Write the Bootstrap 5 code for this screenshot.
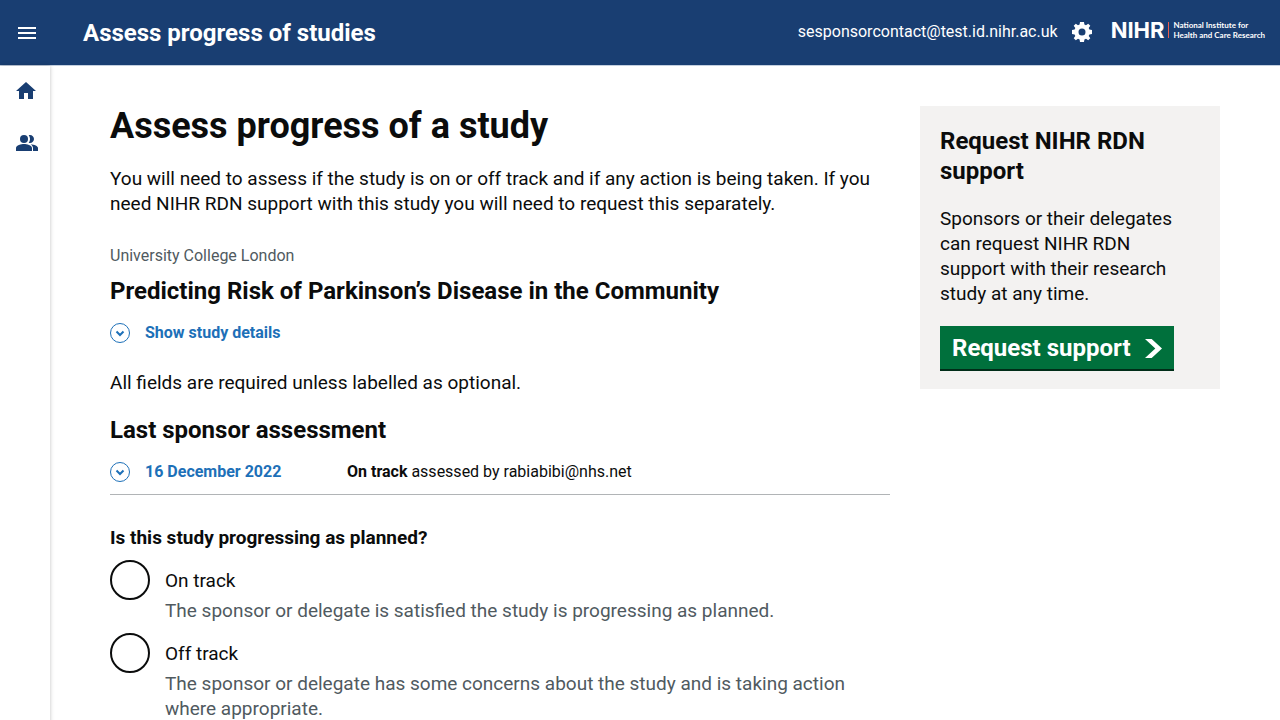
<!DOCTYPE html>
<html lang="en">
<head>
<meta charset="utf-8">
<meta name="viewport" content="width=device-width, initial-scale=1">
<title>Assess progress of studies</title>
<link href="https://cdn.jsdelivr.net/npm/bootstrap@5.3.0/dist/css/bootstrap.min.css" rel="stylesheet">
<style>
:root { --navy: #193e72; --ink: #0b0c0c; --muted: #505a5f; --blue: #1d70b8; }
body { font-family: Roboto, Arial, sans-serif; font-size: 19px; line-height: 25px; color: var(--ink); }
h1, h2, h3, p, legend { margin: 0; }
svg { display: block; flex: none; }
.app-header { background: var(--navy); height: 66px; border-bottom: 1px solid #c3cfdf; color: #fff; }
.menu-btn { width: 53px; height: 65px; color: #fff; }
.app-title { font-size: 24px; line-height: 30px; font-weight: 700; margin-left: 30px; }
.header-tools { padding-bottom: 2px; }
.user-mail { font-size: 16px; line-height: 20px; margin-right: 14px; }
.logo-link { margin: 0 15px 4px 19px; }
.logo-name { font: 700 22px/22px Inter, sans-serif; }
.logo-bar { width: 1px; height: 16px; background: #ea5d4e; }
.logo-text { font: 700 8px/10px Lato, sans-serif; }
.side-nav { width: 50px; flex: none; background: #fff; box-shadow: 0 0 4px rgba(0,0,0,.25); padding: 13px 0 0 14px; gap: 28px; color: var(--navy); }
.page-body { padding: 40px 60px; gap: 30px; }
h1 { font-size: 36px; line-height: 40px; font-weight: 700; }
.title-m { font-size: 24px; line-height: 30px; font-weight: 700; }
.text-s { font-size: 16px; line-height: 20px; }
.text-hint { color: var(--muted); }
.org { margin-top: 30px; }
.study-title { margin-top: 10px; }
.required-note { margin-top: 27px; }
.section-title { margin-top: 20px; }
.toggle { color: var(--blue); font-weight: 700; gap: 15px; text-align: left; }
.study-toggle, .assessment { margin-top: 17px; }
.assessment { gap: 60px; padding-bottom: 12px; border-bottom: 1px solid #b1b4b6; }
.assessment .toggle { min-width: 177px; }
.study-form { margin-top: 30px; }
.question { font-size: 19px; line-height: 25px; font-weight: 700; margin-bottom: 10px; }
.big-radio { appearance: none; width: 40px; height: 40px; margin: 0; border: 2px solid var(--ink); border-radius: 50%; background: #fff; flex: none; }
.big-radio:checked { background: radial-gradient(var(--ink) 10px, #fff 11px); }
.option { gap: 15px; margin-bottom: 10px; }
.option-text { padding-top: 8px; }
.option-text label { display: block; }
.option-text p { margin-top: 5px; }
.support { width: 300px; background: #f3f2f1; padding: 20px 20px 18px; flex: none; }
.support-btn { min-width: 234px; background: #00703c; color: #fff; font-size: 24px; line-height: 30px; font-weight: 700; border-bottom: 2px solid #002d18; padding: 7px 12px 6px; gap: 11px; }
.support-btn:hover { background: #005a30; }
</style>
</head>
<body>
<div class="d-flex flex-column min-vh-100">
<header class="app-header d-flex align-items-center">
  <button type="button" class="menu-btn border-0 bg-transparent p-0 d-flex align-items-center justify-content-center" aria-label="Menu">
    <svg width="18" height="12" viewBox="0 0 18 12" fill="currentColor"><path d="M0 0h18v2H0zM0 5h18v2H0zM0 10h18v2H0z"/></svg>
  </button>
  <div class="app-title">Assess progress of studies</div>
  <div class="header-tools ms-auto d-flex align-items-center">
    <span class="user-mail">sesponsorcontact@test.id.nihr.ac.uk</span>
    <a href="#" class="text-white" aria-label="Settings">
      <svg width="20" height="20" viewBox="2 2 20 20" fill="currentColor" fill-rule="evenodd"><path d="M10 2h4l.4 2.600 1.600.7 2.200-1.600 2.100 2.100L18.700 8l.7 1.600L22 10v4l-2.600.4-.7 1.600 1.600 2.200-2.100 2.100-2.200-1.600-1.600.7L14 22h-4l-.4-2.600-1.600-.7-2.200 1.600-2.100-2.100L5.300 16l-.7-1.600L2 14v-4l2.600-.4.7-1.600-1.600-2.200 2.100-2.100L8 5.300l1.600-.7zM12 8.500a3.500 3.500 0 1 0 0 7 3.500 3.500 0 1 0 0-7z"/></svg>
    </a>
    <a href="#" class="logo-link d-flex align-items-center text-white text-decoration-none" aria-label="NIHR home">
      <span class="logo-name">NIHR</span><span class="logo-bar mx-1"></span><span class="logo-text">National Institute for<br>Health and Care Research</span>
    </a>
  </div>
</header>
<div class="d-flex flex-grow-1">
  <nav class="side-nav d-flex flex-column" aria-label="Main">
    <a href="#" class="text-reset" aria-label="Home"><svg width="24" height="24" viewBox="0 0 24 24" fill="currentColor"><path d="M10 20v-6h4v6h5v-8h3L12 3 2 12h3v8z"/></svg></a>
    <a href="#" class="text-reset" aria-label="Contacts"><svg width="24" height="24" viewBox="0 0 24 24" fill="currentColor"><path d="M16.670 13.130C18.040 14.060 19 15.320 19 17v3h5v-3c0-2.180-3.570-3.470-7.330-3.870z"/><circle cx="10" cy="8" r="4"/><path d="M16 12c2.210 0 4-1.790 4-4s-1.790-4-4-4c-.470 0-.910.100-1.330.240C15.500 5.270 16 6.580 16 8s-.500 2.730-1.330 3.760c.420.140.860.240 1.330.240zM10 13c-2.670 0-8 1.340-8 4v3h16v-3c0-2.660-5.330-4-8-4z"/></svg></a>
  </nav>
  <div class="page-body d-flex align-items-start flex-grow-1">
    <main class="flex-grow-1">
      <h1>Assess progress of a study</h1>
      <p class="mt-3 pt-1">You will need to assess if the study is on or off track and if any action is being taken. If you need NIHR RDN support with this study you will need to request this separately.</p>
      <p class="text-s text-hint org">University College London</p>
      <h2 class="title-m study-title">Predicting Risk of Parkinson’s Disease in the Community</h2>
      <button type="button" class="toggle study-toggle text-s border-0 bg-transparent p-0 d-flex align-items-center" aria-expanded="false">
        <svg width="20" height="20" viewBox="0 0 20 20" fill="none" stroke="currentColor"><circle cx="10" cy="10" r="9.500"/><path d="M6.500 8.500 10 12l3.500-3.500" stroke-width="2"/></svg>
        Show study details
      </button>
      <p class="required-note">All fields are required unless labelled as optional.</p>
      <h3 class="title-m section-title">Last sponsor assessment</h3>
      <div class="assessment text-s d-flex align-items-center">
        <button type="button" class="toggle border-0 bg-transparent p-0 d-flex align-items-center" aria-expanded="false">
          <svg width="20" height="20" viewBox="0 0 20 20" fill="none" stroke="currentColor"><circle cx="10" cy="10" r="9.500"/><path d="M6.500 8.500 10 12l3.500-3.500" stroke-width="2"/></svg>
          16 December 2022
        </button>
        <span><b>On track</b> assessed by rabiabibi@nhs.net</span>
      </div>
      <form class="study-form">
        <fieldset>
          <legend class="question">Is this study progressing as planned?</legend>
          <div class="option d-flex">
            <input class="big-radio" type="radio" name="status" id="on-track" aria-describedby="on-hint">
            <div class="option-text"><label for="on-track">On track</label><p class="text-hint" id="on-hint">The sponsor or delegate is satisfied the study is progressing as planned.</p></div>
          </div>
          <div class="option d-flex">
            <input class="big-radio" type="radio" name="status" id="off-track" aria-describedby="off-hint">
            <div class="option-text"><label for="off-track">Off track</label><p class="text-hint" id="off-hint">The sponsor or delegate has some concerns about the study and is taking action where appropriate.</p></div>
          </div>
        </fieldset>
      </form>
    </main>
    <aside class="support">
      <h2 class="title-m">Request NIHR RDN support</h2>
      <p class="my-3 py-1">Sponsors or their delegates can request NIHR RDN support with their research study at any time.</p>
      <button type="button" class="support-btn border-top-0 border-start-0 border-end-0 d-inline-flex align-items-center justify-content-between">Request support
        <svg width="17" height="19" viewBox="0 0 33 40" preserveAspectRatio="none" fill="currentColor"><path d="M0 0h13l20 20-20 20H0l20-20z"/></svg>
      </button>
    </aside>
  </div>
</div>
</div>
<script src="https://cdn.jsdelivr.net/npm/bootstrap@5.3.0/dist/js/bootstrap.bundle.min.js"></script>
</body>
</html>
